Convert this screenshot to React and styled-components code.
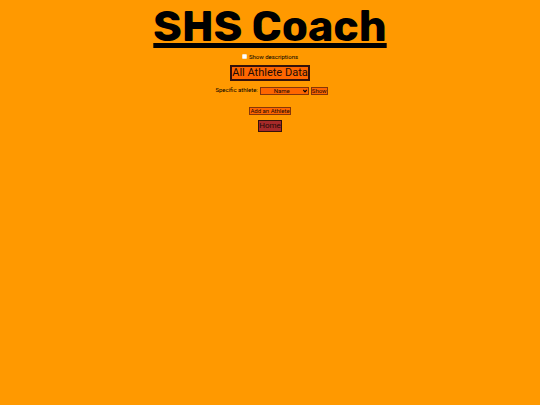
import React from "react";
import styled, { createGlobalStyle } from "styled-components";

const GlobalStyle = createGlobalStyle`
  body {
    margin: 0;
    background: #ff9900;
    color: #000;
    font-family: Roboto, "Liberation Sans", sans-serif;
  }
`;

const Page = styled.main`
  display: flex;
  flex-direction: column;
  align-items: center;
  padding-top: 1px;
`;

const Title = styled.h1`
  margin: 0;
  font-family: Rubik, Inter, sans-serif;
  font-size: 43px;
  line-height: 52px;
  font-weight: 700;
  text-decoration: underline;
  text-decoration-thickness: 5px;
  text-underline-offset: 2px;
  text-decoration-skip-ink: none;
`;

const CheckLabel = styled.label`
  display: flex;
  align-items: center;
  gap: 2px;
  font-size: 6px;
  line-height: 8px;
`;

const Check = styled.input`
  appearance: none;
  box-sizing: border-box;
  width: 5px;
  height: 5px;
  margin: 0 0 2px;
  border: 1px solid #f5e6cc;
  border-radius: 1px;
  background: #fff;

  &:checked {
    background: #0075ff;
  }
`;

const sizes = {
  small: "font-size: 6px; line-height: 6px; border-width: 1px;",
  medium: "font-size: 8px; line-height: 10px; border-width: 1px;",
  large: "font-size: 11px; line-height: 12px; border-width: 2px;",
};

const Button = styled.button`
  box-sizing: border-box;
  padding: 0;
  font-family: inherit;
  color: #210b06;
  background: ${(p) => (p.$tone === "red" ? "#a52a2a" : "#ff6600")};
  border-style: solid;
  border-color: ${(p) => (p.$size === "small" ? "#86360a" : "#35120a")};
  ${(p) => sizes[p.$size]}
`;

const AllData = styled(Button)`
  margin-top: 4px;
`;

const Form = styled.form`
  display: flex;
  align-items: center;
  gap: 2px;
  margin: 6px 0 0 3px;
`;

const FieldLabel = styled.label`
  align-self: flex-start;
  font-size: 6px;
  line-height: 6px;
`;

const SelectWrap = styled.span`
  display: grid;
  align-items: center;
  width: 49px;

  > * {
    grid-area: 1 / 1;
  }
`;

const Select = styled.select`
  appearance: none;
  box-sizing: border-box;
  width: 100%;
  height: 8px;
  margin: 0;
  padding: 0 5px 0 0;
  border: 1px solid #86360a;
  border-radius: 0;
  background: #ff6600;
  color: #210b06;
  font-family: inherit;
  font-size: 6px;
  line-height: 6px;
  text-align: center;
  text-align-last: center;
`;

const Arrow = styled.svg`
  justify-self: end;
  width: 4px;
  height: 4px;
  margin-right: 2px;
  pointer-events: none;
`;

const Links = styled.nav`
  display: flex;
  flex-direction: column;
  align-items: center;
  gap: 5px;
  margin-top: 12px;
`;

export default function App() {
  return (
    <Page>
      <GlobalStyle />
      <Title>SHS Coach</Title>
      <CheckLabel>
        <Check type="checkbox" />
        Show descriptions
      </CheckLabel>
      <AllData type="button" $size="large">All Athlete Data</AllData>
      <Form onSubmit={(e) => e.preventDefault()}>
        <FieldLabel htmlFor="athlete">Specific athlete:</FieldLabel>
        <SelectWrap>
          <Select id="athlete">
            <option>Name</option>
          </Select>
          <Arrow viewBox="0 0 4 4" aria-hidden="true">
            <path d="M0.3 1L2 2.8L3.7 1" fill="none" stroke="#000" strokeWidth="1.2" />
          </Arrow>
        </SelectWrap>
        <Button type="submit" $size="small">Show</Button>
      </Form>
      <Links>
        <Button type="button" $size="small">Add an Athlete</Button>
        <Button type="button" $size="medium" $tone="red">Home</Button>
      </Links>
    </Page>
  );
}
